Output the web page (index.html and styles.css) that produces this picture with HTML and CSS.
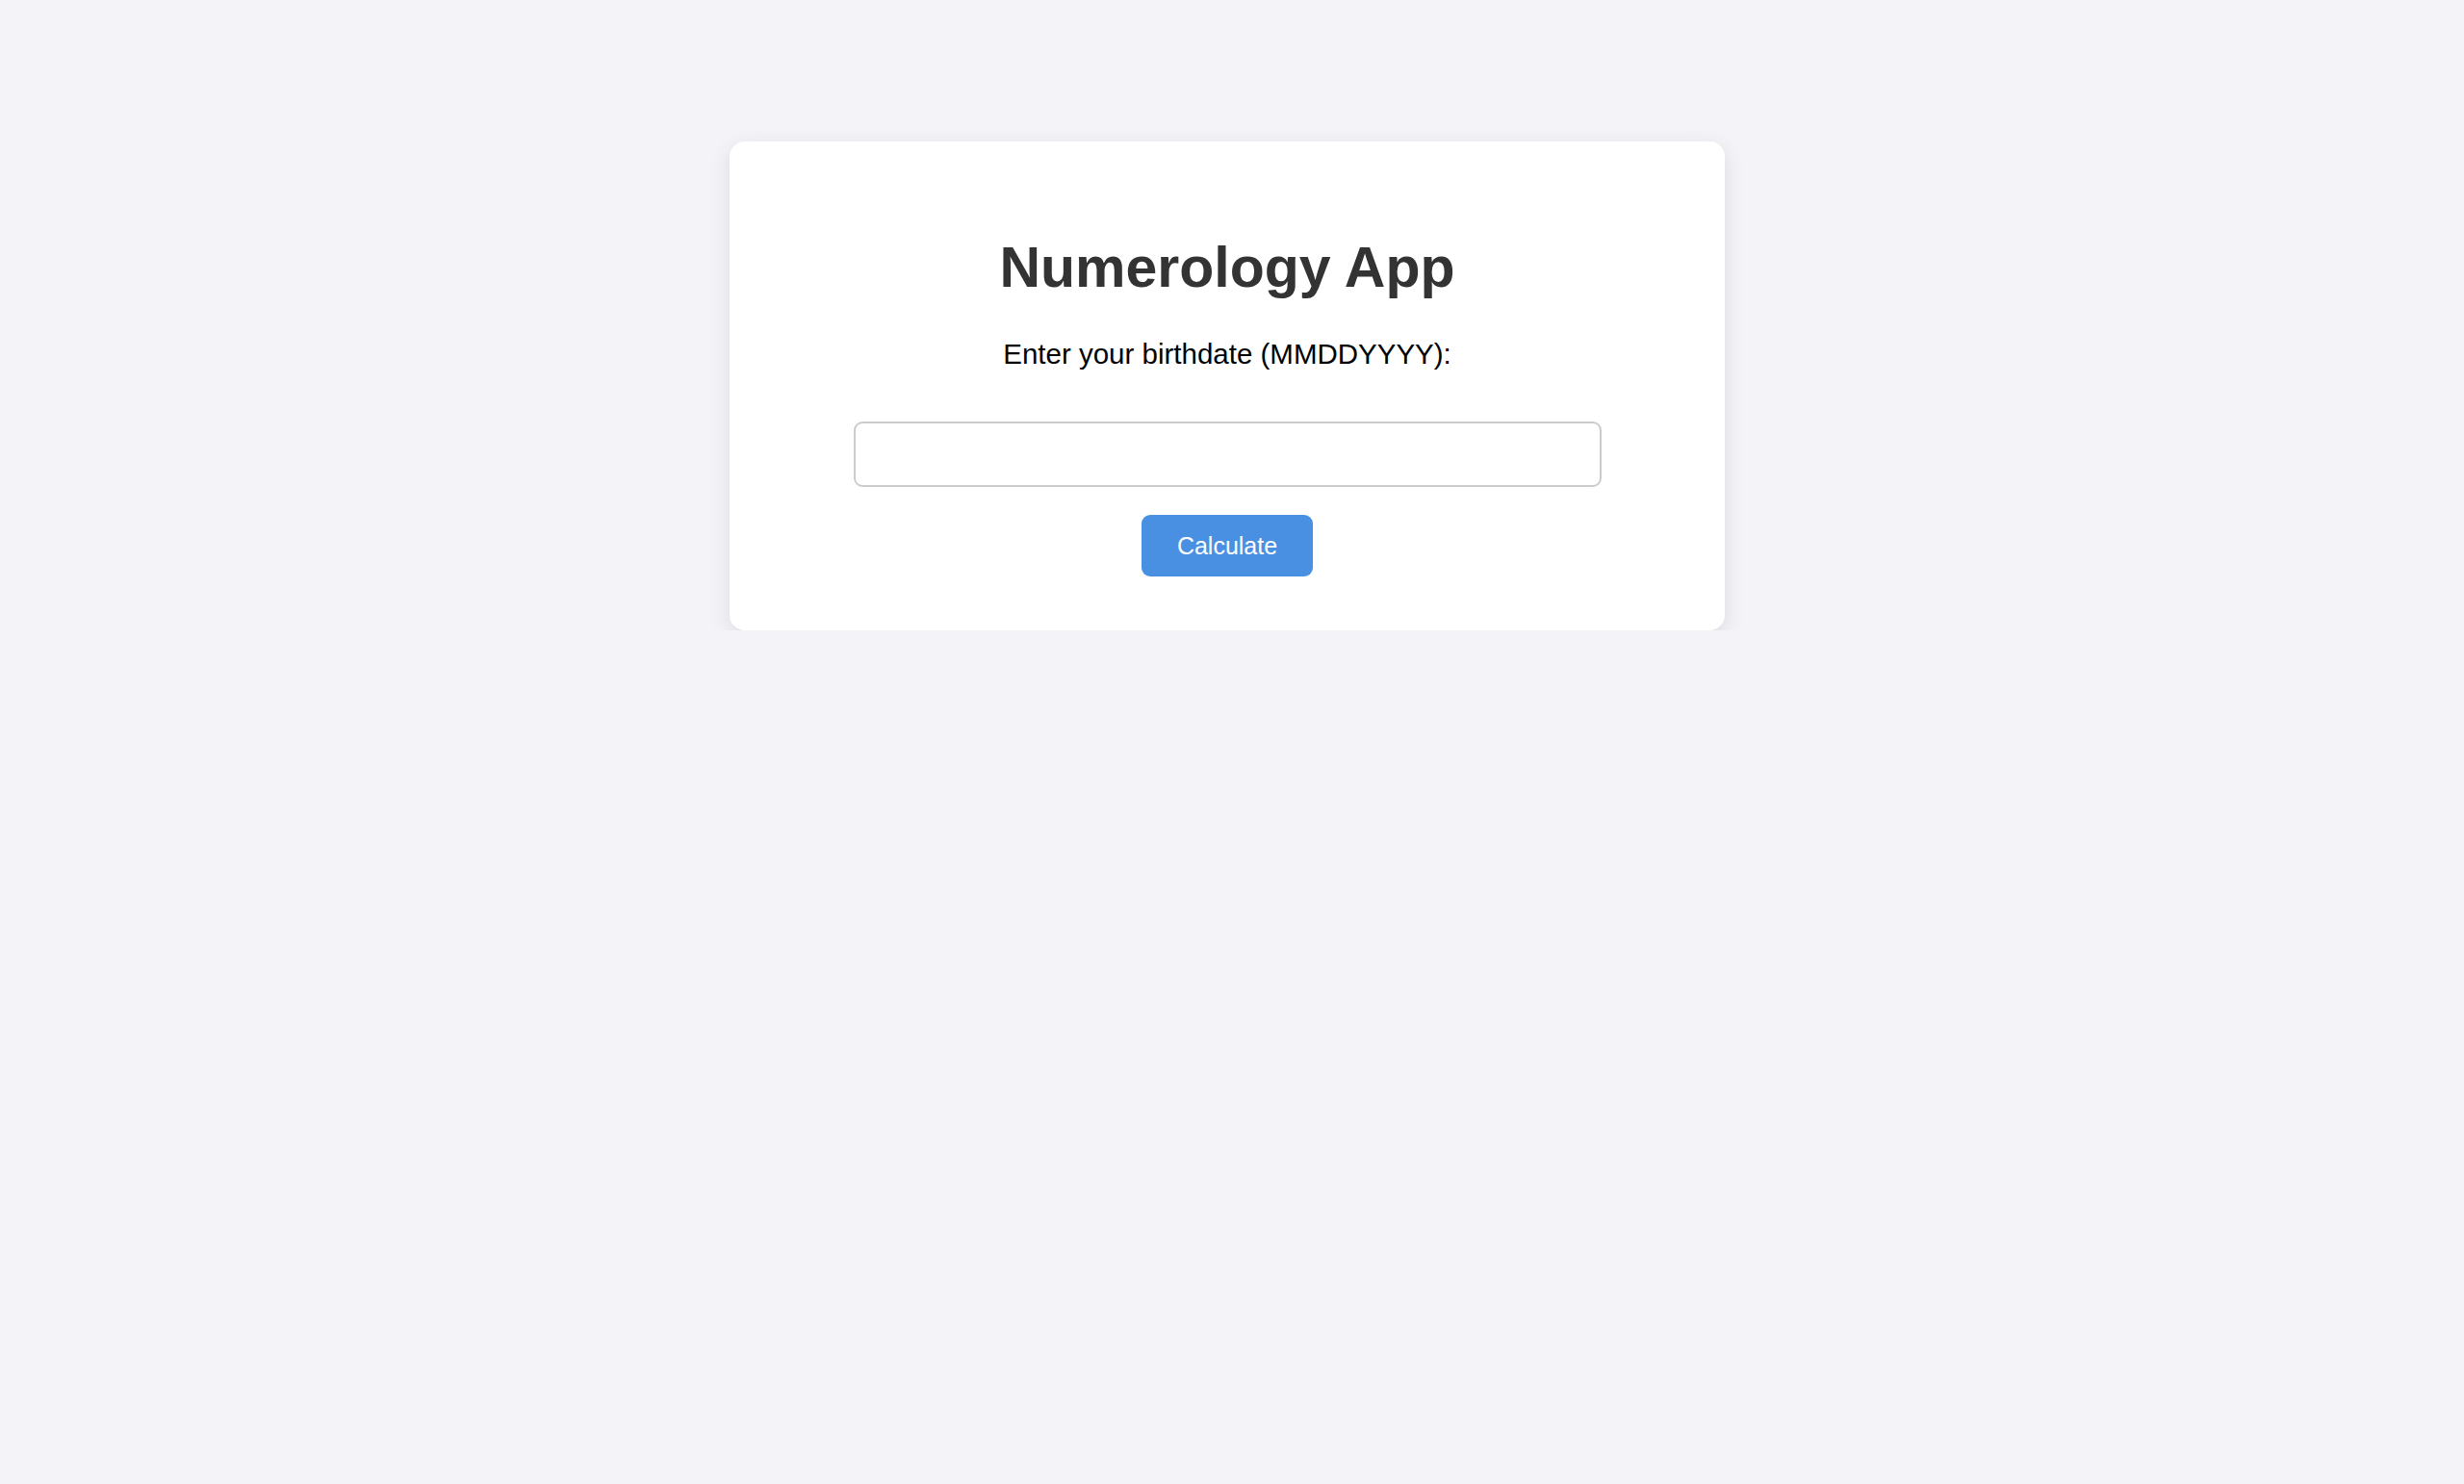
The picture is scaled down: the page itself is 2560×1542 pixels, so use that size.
FILE: index.html
```html
<!DOCTYPE html>
<html lang="en">
<head>
  <meta charset="UTF-8" />
  <title>Numerology App</title>
  <link rel="stylesheet" href="styles.css">
</head>
<body>

  <!-- Main Card -->
  <div class="page">
    <div class="card">
      <h1>Numerology App</h1>
      <p>Enter your birthdate (MMDDYYYY):</p>
      <input type="text" id="birthdate" />
      <button onclick="calculate()">Calculate</button>
      <div class="result" id="result"></div>
    </div>
  </div>

  <script>
    // Reduce the birthdate to a single digit
    function calculate() {
      const value = document.getElementById('birthdate').value.trim();
      const result = document.getElementById('result');
      if (!/^\d{8}$/.test(value)) {
        result.textContent = "Please enter 8 digits.";
        return;
      }
      let sum = value.split('').reduce((a, b) => a + Number(b), 0);
      while (sum > 9 && sum !== 11 && sum !== 22) {
        sum = String(sum).split('').reduce((a, b) => a + Number(b), 0);
      }
      result.textContent = "Your life path number is " + sum;
    }
  </script>

</body>
</html>
```

FILE: styles.css
```css
* {
  box-sizing: border-box;
}

body {
  margin: 0;
  font-family: "Liberation Sans", Arial, sans-serif;
  background-color: #f4f4f8;
}

.page {
  display: flex;
  justify-content: center;
  padding: 147px 10px 0 0;
}

.card {
  background: #fff;
  width: 1034px;
  padding: 97px 0 56px;
  border-radius: 16px;
  box-shadow: 0 6px 22px rgba(0, 0, 0, 0.1);
  display: flex;
  flex-direction: column;
  align-items: center;
}

h1 {
  margin: 0;
  font-size: 59px;
  color: #333;
}

p {
  margin: 39px 0 0;
  font-size: 29.5px;
  color: #000;
}

input {
  width: 777px;
  height: 68px;
  margin-top: 53px;
  padding: 0 18px;
  border: 2px solid #ccc;
  border-radius: 9px;
  font-size: 28px;
  font-family: inherit;
}

button {
  margin-top: 29px;
  height: 64px;
  padding: 0 37px;
  background: #4a90e2;
  color: #fff;
  border: none;
  border-radius: 9px;
  font-size: 25px;
  font-family: inherit;
  cursor: pointer;
}

.result {
  font-size: 28px;
  color: #333;
}

.result:empty {
  display: none;
}
```
